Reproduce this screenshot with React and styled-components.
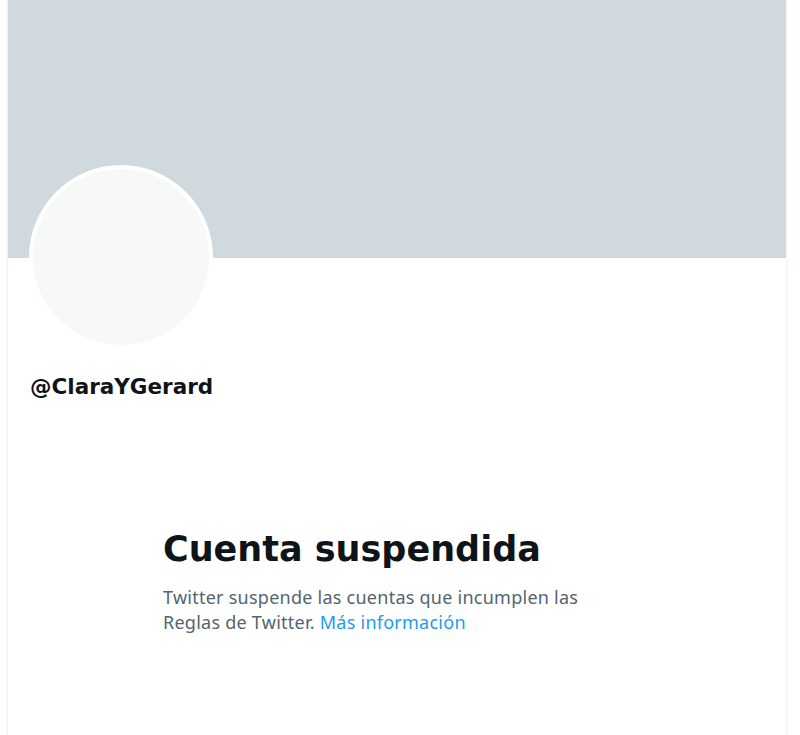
import React from "react";
import styled, { createGlobalStyle } from "styled-components";

const GlobalStyle = createGlobalStyle`
  html, body {
    margin: 0;
    padding: 0;
    background: #ffffff;
  }
  body {
    font-family: "Noto Sans", "Liberation Sans", Arial, sans-serif;
  }
`;

const Column = styled.main`
  margin-left: 7px;
  width: 780px;
  min-height: 735px;
  border-left: 1px solid #eff3f4;
  border-right: 1px solid #eff3f4;
  box-sizing: border-box;
`;

const Banner = styled.div`
  height: 258px;
  background: #cfd9de;
`;

const Header = styled.div`
  padding: 0 0 0 21px;
`;

const Avatar = styled.div`
  width: 176px;
  height: 176px;
  margin-top: -93px;
  border-radius: 50%;
  border: 4px solid #ffffff;
  background: #f7f9f9;
`;

const Handle = styled.h2`
  margin: 24px 0 0 1px;
  font-family: "DejaVu Sans", "Noto Sans", sans-serif;
  font-size: 21.5px;
  line-height: 28px;
  font-weight: 700;
  color: #0f1419;
`;

const EmptyState = styled.section`
  padding: 126px 0 0 155px;
  max-width: 450px;
`;

const Title = styled.h1`
  margin: 0;
  font-family: "DejaVu Sans", "Noto Sans", sans-serif;
  font-size: 35px;
  line-height: 44px;
  font-weight: 700;
  color: #0f1419;
`;

const Message = styled.p`
  margin: 14px 0 0;
  font-size: 18px;
  line-height: 25px;
  letter-spacing: 0.25px;
  color: #536471;
`;

const MoreLink = styled.a`
  color: #1d9bf0;
  text-decoration: none;
`;

const App = () => {
  return (
    <>
      <GlobalStyle />
      <Column>
        <Banner />
        <Header>
          <Avatar />
          <Handle>@ClaraYGerard</Handle>
        </Header>
        <EmptyState>
          <Title>Cuenta suspendida</Title>
          <Message>
            Twitter suspende las cuentas que incumplen las Reglas de Twitter.{" "}
            <MoreLink href="#">Más información</MoreLink>
          </Message>
        </EmptyState>
      </Column>
    </>
  );
};

export default App;
